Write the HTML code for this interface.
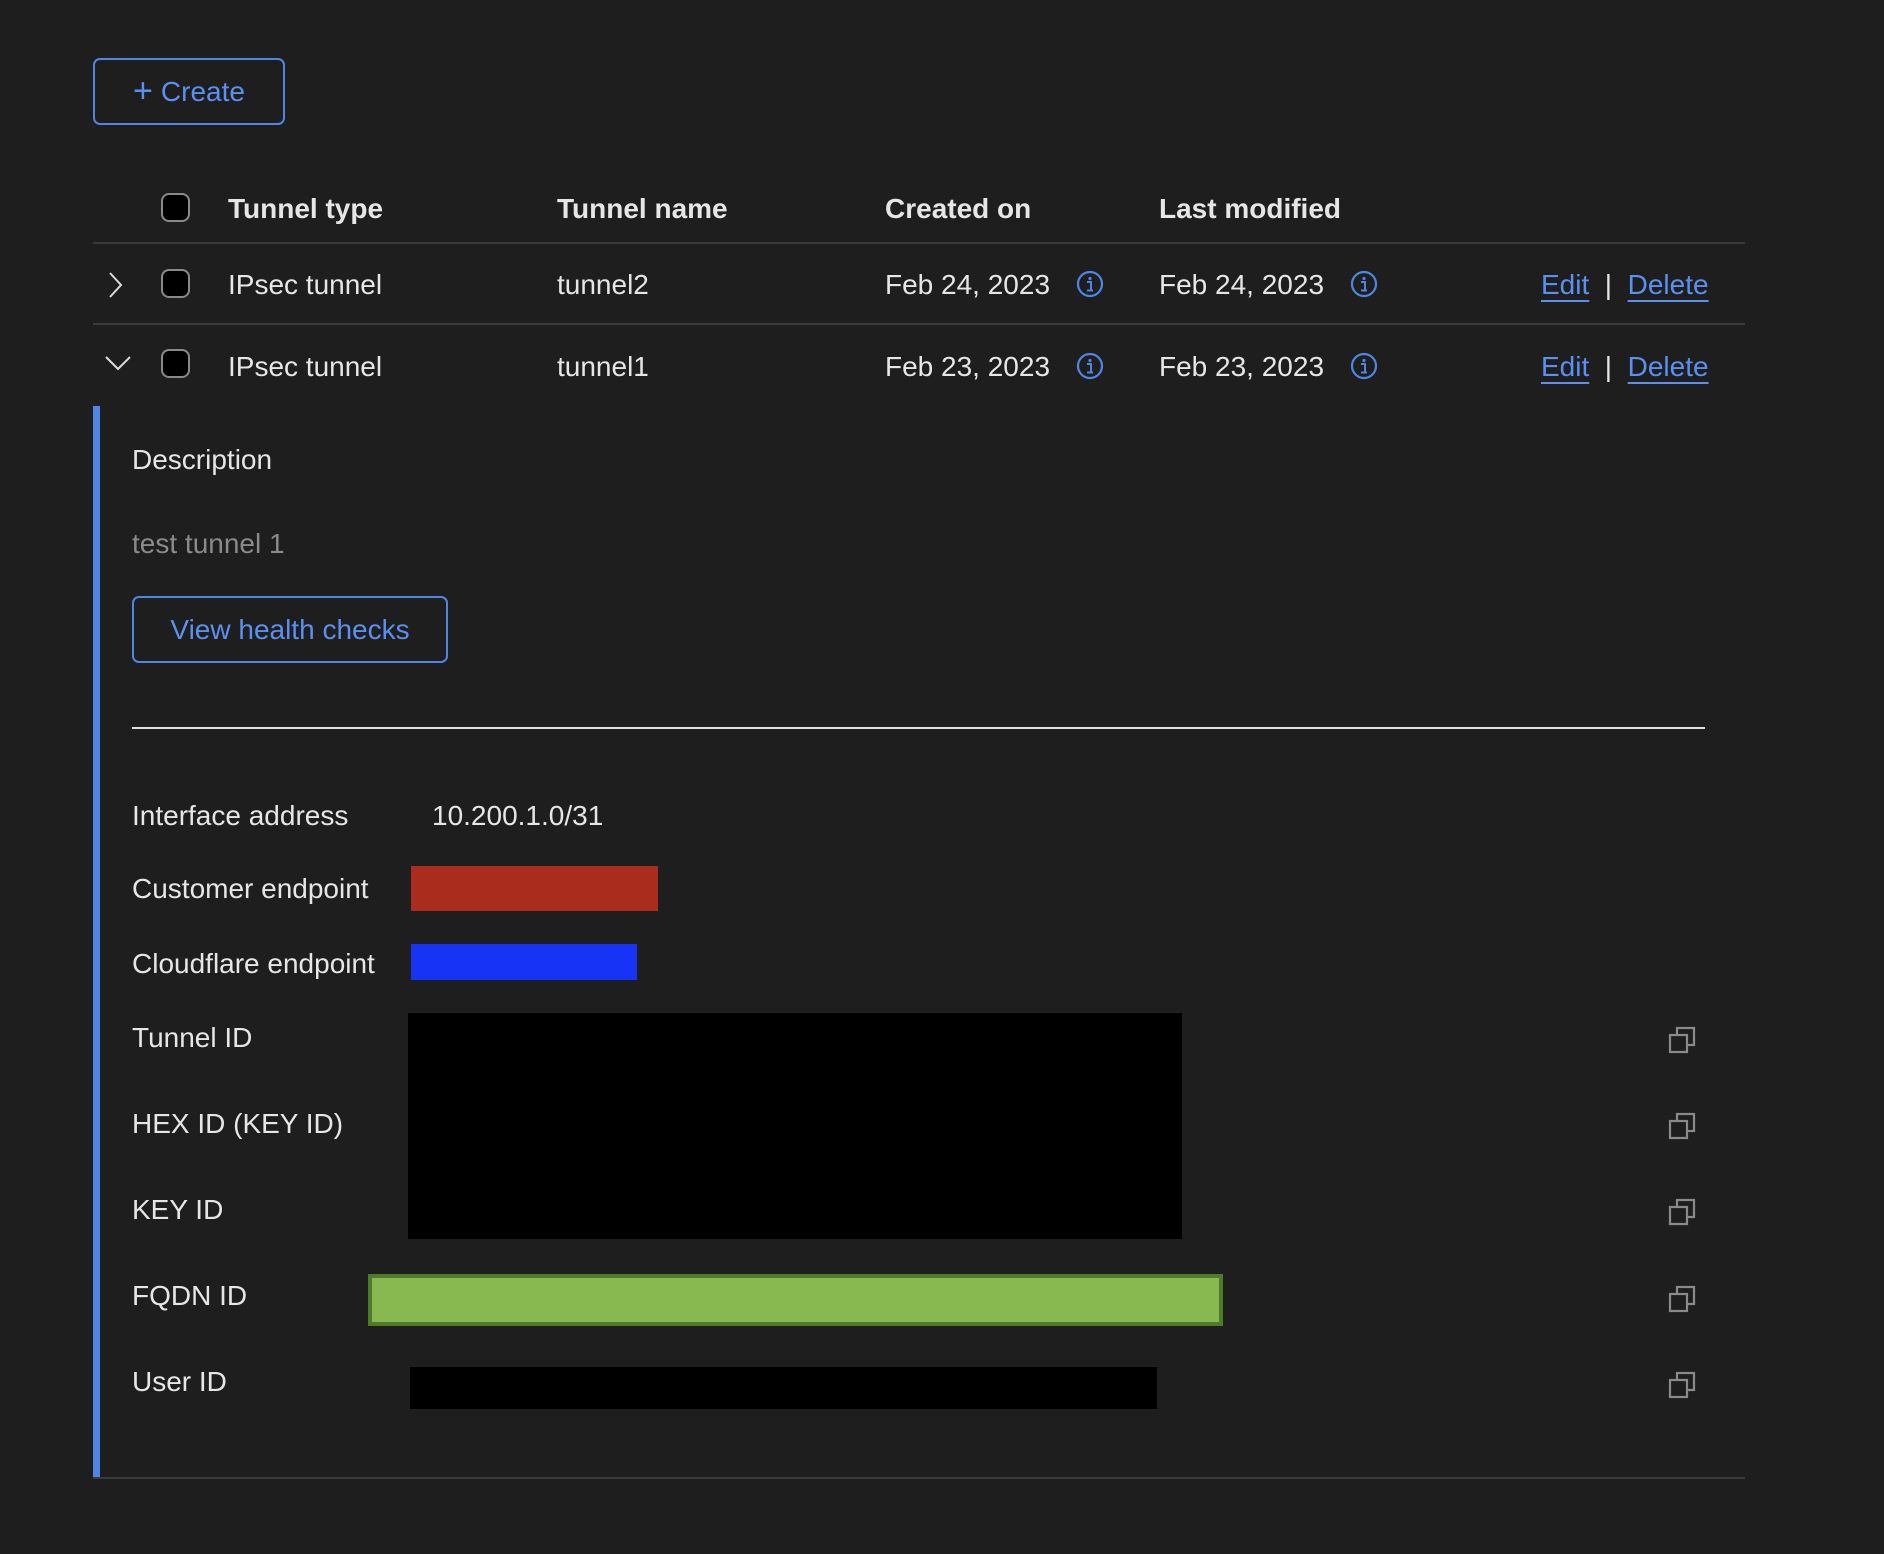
<!DOCTYPE html>
<html><head><style>
body{margin:0;width:1884px;height:1554px;background:#1e1e1e;font-family:"Liberation Sans",sans-serif;color:#e6e6e6;position:relative;overflow:hidden}
.a{position:absolute;white-space:nowrap}
.t{font-size:28px;transform:translateY(-50%)}
.b{font-weight:bold}
.btn{position:absolute;border:2px solid #4f86e6;border-radius:7px;color:#5b8ff0;font-size:28px;display:flex;align-items:center;justify-content:center;box-sizing:border-box}
.line{position:absolute;height:2px;background:#3a3a3a}
.cb{position:absolute;width:29px;height:29px;border:2px solid #8a8a8a;border-radius:8px;background:#000;box-sizing:border-box}
.lnk{color:#5b8ff0;text-decoration:underline;text-underline-offset:6px}
.g{color:#8a8a8a}
</style></head><body>
<div class="btn" style="left:93px;top:58px;width:192px;height:67px"><span style="font-size:34px;margin-right:8px;font-weight:300">+</span>Create</div>

<div class="cb" style="left:161px;top:193px"></div>
<div class="a t b" style="left:228px;top:209px">Tunnel type</div>
<div class="a t b" style="left:557px;top:209px">Tunnel name</div>
<div class="a t b" style="left:885px;top:209px">Created on</div>
<div class="a t b" style="left:1159px;top:209px">Last modified</div>
<div class="line" style="left:93px;top:242px;width:1652px"></div>

<svg class="a" style="left:105px;top:270px" width="22" height="30"><path d="M5 3 L16 15 L5 27" fill="none" stroke="#ddd" stroke-width="2"/></svg>
<div class="cb" style="left:161px;top:269px"></div>
<div class="a t" style="left:228px;top:285px">IPsec tunnel</div>
<div class="a t" style="left:557px;top:285px">tunnel2</div>
<div class="a t" style="left:885px;top:285px">Feb 24, 2023</div>
<div class="a t" style="left:1159px;top:285px">Feb 24, 2023</div>
<div class="a t" style="left:1541px;top:285px"><span class="lnk">Edit</span>&nbsp;&nbsp;|&nbsp;&nbsp;<span class="lnk">Delete</span></div>
<div class="line" style="left:93px;top:323px;width:1652px"></div>

<svg class="a" style="left:103px;top:352px" width="30" height="22"><path d="M3 5 L15 17 L27 5" fill="none" stroke="#ddd" stroke-width="2"/></svg>
<div class="cb" style="left:161px;top:349px"></div>
<div class="a t" style="left:228px;top:367px">IPsec tunnel</div>
<div class="a t" style="left:557px;top:367px">tunnel1</div>
<div class="a t" style="left:885px;top:367px">Feb 23, 2023</div>
<div class="a t" style="left:1159px;top:367px">Feb 23, 2023</div>
<div class="a t" style="left:1541px;top:367px"><span class="lnk">Edit</span>&nbsp;&nbsp;|&nbsp;&nbsp;<span class="lnk">Delete</span></div>

<svg width="0" height="0" style="position:absolute"><defs><g id="inf"><circle cx="14" cy="14" r="12" fill="none" stroke="#4f86e6" stroke-width="2.2"/><circle cx="14" cy="8.5" r="1.6" fill="#4f86e6"/><path d="M11 12h4v8M11 20.5h6" fill="none" stroke="#4f86e6" stroke-width="2"/></g>
<g id="cp"><rect x="9" y="3" width="17" height="17" fill="none" stroke="#8a8a8a" stroke-width="2.2"/><rect x="2" y="10" width="17" height="17" fill="#1e1e1e" stroke="#8a8a8a" stroke-width="2.2"/></g></defs></svg>
<svg class="a" style="left:1076px;top:270px" width="28" height="28"><use href="#inf"/></svg>
<svg class="a" style="left:1350px;top:270px" width="28" height="28"><use href="#inf"/></svg>
<svg class="a" style="left:1076px;top:352px" width="28" height="28"><use href="#inf"/></svg>
<svg class="a" style="left:1350px;top:352px" width="28" height="28"><use href="#inf"/></svg>

<div class="a" style="left:93px;top:406px;width:7px;height:1072px;background:#4f86e6"></div>
<div class="a t" style="left:132px;top:460px">Description</div>
<div class="a t g" style="left:132px;top:544px">test tunnel 1</div>
<div class="btn" style="left:132px;top:596px;width:316px;height:67px">View health checks</div>
<div class="a" style="left:132px;top:727px;width:1573px;height:2px;background:#e0e0e0"></div>

<div class="a t" style="left:132px;top:816px">Interface address</div>
<div class="a t" style="left:432px;top:816px">10.200.1.0/31</div>
<div class="a t" style="left:132px;top:889px">Customer endpoint</div>
<div class="a" style="left:411px;top:866px;width:247px;height:45px;background:#a92c1c"></div>
<div class="a t" style="left:132px;top:964px">Cloudflare endpoint</div>
<div class="a" style="left:411px;top:944px;width:226px;height:36px;background:#1733f5"></div>
<div class="a t" style="left:132px;top:1038px">Tunnel ID</div>
<div class="a t" style="left:132px;top:1124px">HEX ID (KEY ID)</div>
<div class="a t" style="left:132px;top:1210px">KEY ID</div>
<div class="a" style="left:408px;top:1013px;width:774px;height:226px;background:#000"></div>
<div class="a t" style="left:132px;top:1296px">FQDN ID</div>
<div class="a" style="left:368px;top:1274px;width:855px;height:52px;background:#88b850;border:4px solid #4f7a2a;box-sizing:border-box"></div>
<div class="a t" style="left:132px;top:1382px">User ID</div>
<div class="a" style="left:410px;top:1367px;width:747px;height:42px;background:#000"></div>

<svg class="a" style="left:1668px;top:1025px" width="30" height="30"><use href="#cp"/></svg>
<svg class="a" style="left:1668px;top:1111px" width="30" height="30"><use href="#cp"/></svg>
<svg class="a" style="left:1668px;top:1197px" width="30" height="30"><use href="#cp"/></svg>
<svg class="a" style="left:1668px;top:1284px" width="30" height="30"><use href="#cp"/></svg>
<svg class="a" style="left:1668px;top:1370px" width="30" height="30"><use href="#cp"/></svg>

<div class="line" style="left:93px;top:1477px;width:1652px"></div>
</body></html>
